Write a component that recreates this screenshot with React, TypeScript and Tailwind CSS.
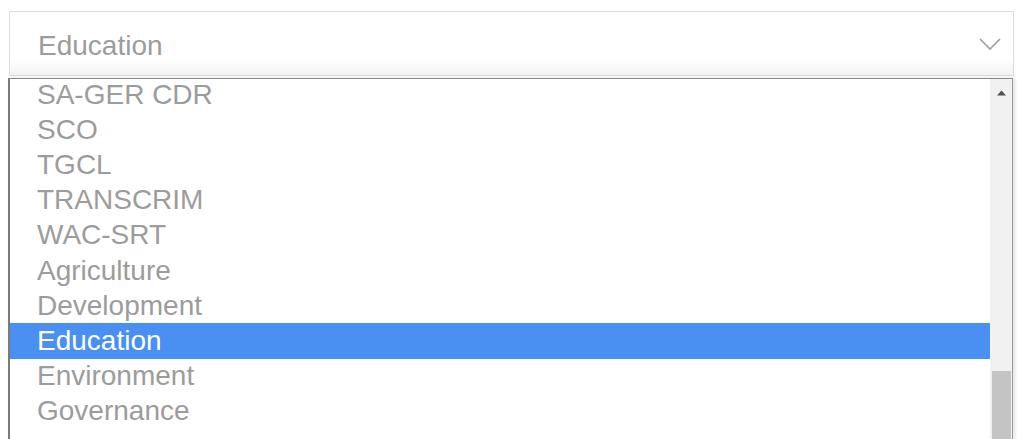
import React from "react";

const options = [
  "SA-GER CDR",
  "SCO",
  "TGCL",
  "TRANSCRIM",
  "WAC-SRT",
  "Agriculture",
  "Development",
  "Education",
  "Environment",
  "Governance",
];

const selected = "Education";

const App: React.FC = () => {
  return (
    <div
      className="w-[1024px] h-[439px] overflow-hidden bg-white flex flex-col"
      style={{ fontFamily: '"Liberation Sans", Arial, sans-serif' }}
    >
      {/* select box */}
      <div className="ml-[9px] mt-[11px] w-[1005px] h-[65px] border border-[#dcdcdc] bg-gradient-to-b from-white from-75% to-[#f3f3f3] flex items-center justify-between pl-[28px] pr-[10px]">
        <span className="text-[28px] leading-none text-[#9c9c9c] mt-[4px]">
          {selected}
        </span>
        <svg width="22" height="12" viewBox="0 0 22 12" className="mr-[2px] mt-[0px]">
          <path d="M1 1 L11 11 L21 1" fill="none" stroke="#9c9c9c" strokeWidth="1.6" />
        </svg>
      </div>

      {/* dropdown list */}
      <div className="ml-[8px] mt-[2px] w-[1005px] flex-1 border-l-2 border-t border-r border-l-[#7a7a7a] border-t-[#8a8a8a] border-r-[#9a9a9a] flex overflow-hidden shadow-[2px_0_4px_rgba(0,0,0,0.12)]">
        <div className="flex-1 overflow-hidden">
          <div className="-mt-[2px] flex flex-col">
            {options.map((opt) => (
              <div
                key={opt}
                className={
                  opt === selected
                    ? "h-[35.2px] flex items-center pl-[27px] text-[28px] leading-none text-white bg-[#4a90f3]"
                    : "h-[35.2px] flex items-center pl-[27px] text-[28px] leading-none text-[#9c9c9c]"
                }
              >
                {opt}
              </div>
            ))}
          </div>
        </div>
        {/* scrollbar */}
        <div className="w-[22px] bg-[#f1f1f1] flex flex-col items-center">
          <svg width="9" height="6" viewBox="0 0 9 6" className="mt-[11px]">
            <path d="M0 5.5 L4.5 0.5 L9 5.5 Z" fill="#505050" />
          </svg>
          <div className="mt-auto w-[19px] h-[68px] bg-[#c4c4c4]" />
        </div>
      </div>
    </div>
  );
};

export default App;
